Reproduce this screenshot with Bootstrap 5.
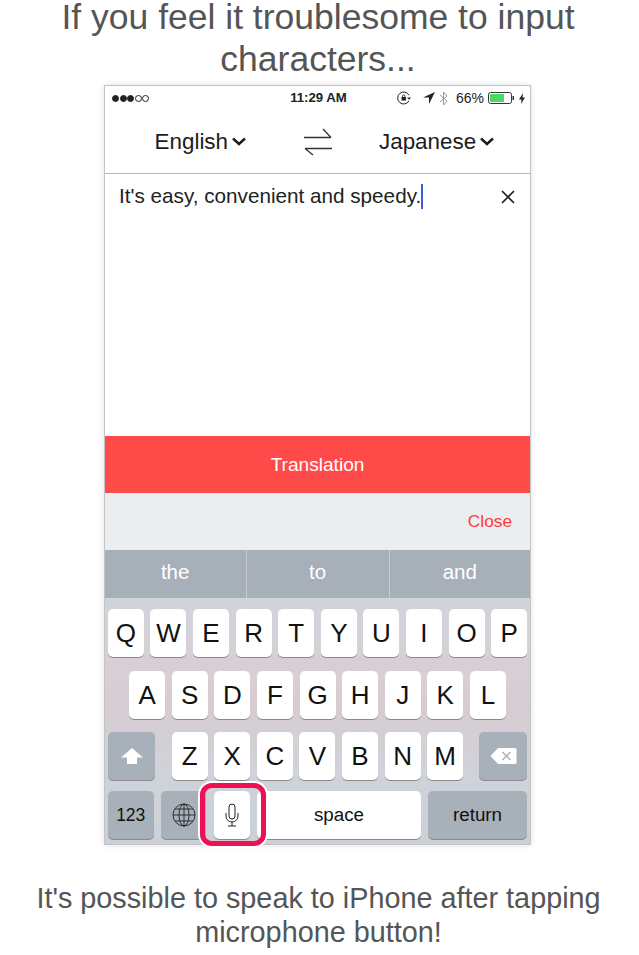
<!DOCTYPE html>
<html lang="en">
<head>
  <meta charset="UTF-8">
  <title>Voice input</title>
  <meta name="viewport" content="width=device-width, initial-scale=1.0"/>
  <link href="https://cdn.jsdelivr.net/npm/bootstrap@5.3.3/dist/css/bootstrap.min.css" rel="stylesheet">
  <style>
    body {
      background-color: #fff;
      font-family: "Liberation Sans", Arial, sans-serif;
      overflow: hidden;
    }
    .page-head {
      height: 85px;
      padding-right: 3px;
      font-size: 35.5px;
      line-height: 34px;
      color: #555;
      text-align: center;
      margin: 0;
      font-weight: 400;
      font-family: "Liberation Sans", Arial, sans-serif;
    }
    .page-head span { display: block; }
    .page-head span + span { margin-top: 8px; }
    .phone {
      width: 427px;
      height: 760px;
      margin-left: 104px;
      border: 1px solid #c4c4c4;
      box-shadow: 0 0 6px rgba(0,0,0,.12);
      position: relative;
      background: #fff;
    }
    .status-bar {
      height: 24px;
      font-size: 14px;
      color: #222;
      padding: 0 5px 0 7px;
    }
    .status-bar > div { flex: 1 1 0; }
    .dot {
      width: 7px;
      height: 7px;
      border-radius: 50%;
      border: 1px solid #222;
      margin-right: .6px;
    }
    .dot.on { background: #222; }
    .clock { font-weight: 700; font-size: 13.2px; text-align: center; }
    .lang-bar {
      height: 64px;
      border-bottom: 1px solid #ff9a9a;
      font-size: 22.4px;
      color: #1c1c1c;
    }
    .lang-en { width: 141px; }
    .lang-jp { width: 152px; padding-left: 1px; }
    .swap-icon { margin-left: 12px; }
    .input-area {
      height: 262px;
      padding: 8px 15px 8px 14px;
      font-size: 20.7px;
      line-height: 28px;
      color: #222;
    }
    .caret-mark {
      display: inline-block;
      width: 2px;
      height: 25px;
      background: #3a62d8;
      vertical-align: -6px;
    }
    .translate-bar {
      height: 57px;
      padding-top: 1px;
      background: #ff4a4a;
      color: #fff;
      font-size: 19.1px;
    }
    .close-bar {
      height: 57px;
      padding-top: 1px;
      background: #ecedef;
      color: #ff3b3b;
      font-size: 17.3px;
      padding-right: 18px;
    }
    .keyboard {
      height: 294px;
      background: linear-gradient(180deg, #cfd5dc 0%, #d0d4da 20%, #d8ced4 42%, #d6cdd3 55%, #ced3d9 80%, #ccd1d7 100%);
    }
    .suggest-row {
      height: 48px;
      background: #a7afb9;
      color: #fff;
      font-size: 20.5px;
      gap: 1px;
    }
    .suggest-row > div {
      flex: 1 1 0;
      display: flex;
      align-items: center;
      justify-content: center;
      padding-bottom: 3px;
    }
    .suggest-row > div + div { border-left: 1px solid #c6ccd3; }
    .key-row { gap: 6.6px; justify-content: center; }
    .key {
      width: 36px;
      height: 48px;
      background: #fff;
      border-radius: 5px;
      box-shadow: 0 1px 0 #8a8a8e;
      font-size: 26px;
      color: #111;
      display: flex;
      align-items: center;
      justify-content: center;
      flex: none;
    }
    .key.dark { background: #a8b0ba; }
    .row-1 { margin-top: 11px; }
    .row-2 { margin-top: 14px; }
    .row-3 { margin-top: 13px; justify-content: flex-start; padding: 0 3px; }
    .row-4 { margin-top: 11px; justify-content: flex-start; padding: 0 3px; gap: 0; }
    .key.small-txt { font-size: 18.8px; }
    .key.num-txt { font-size: 17.5px; width: 45.500px; }
    .shift-key { width: 47px; margin-right: 10px; }
    .back-key { width: 48px; margin-left: 9.400px; }
    .globe-key { width: 45px; margin-left: 7.500px; padding-left: 11px; justify-content: flex-start; }
    .mic-key { margin-left: 8px; }
    .space-key { width: 164px; margin-left: 7px; }
    .return-key { width: 99px; margin-left: 7px; }
    .mic-frame {
      position: absolute;
      left: 95px;
      top: 697px;
      width: 66px;
      height: 63px;
      border: 5px solid #ee0f55;
      border-radius: 12px;
      box-shadow: 0 0 0 2px #fff;
    }
    .page-foot {
      margin: 36px 0 0;
      padding-right: 2px;
      font-size: 28.8px;
      line-height: 34px;
      color: #555;
      text-align: center;
    }
  </style>
</head>
<body>

<h1 class="page-head"><span>If you feel it troublesome to input</span><span>characters...</span></h1>

<div class="phone">
  <div class="status-bar d-flex align-items-center">
    <div class="d-flex align-items-center">
      <span class="dot on"></span><span class="dot on"></span><span class="dot on"></span><span class="dot"></span><span class="dot"></span>
    </div>
    <div class="clock">11:29 AM</div>
    <div class="d-flex align-items-center justify-content-end gap-1">
      <svg class="me-2" width="14" height="14" viewBox="0 0 14 14" fill="none" stroke="#222"><path d="M12 9.800A6 6 0 1 1 12 4.200"/><path d="M14 6.500l-2 2.300-2-2.300z" fill="#222" stroke="none"/><rect x="4.500" y="6" width="4.500" height="3.500" fill="#222" stroke="none"/><path d="M5.500 6V5a1.200 1.200 0 0 1 2.400 0v1" stroke-width=".8"/></svg>
      <svg width="12" height="12" viewBox="0 0 12 12"><path d="M12 0L0 5.500h6V12z" fill="#222"/></svg>
      <svg class="me-1" width="9" height="15" viewBox="0 0 9 15" fill="none" stroke="#999"><path d="M1 4l7 6-3.500 4V1L8 5l-7 6"/></svg>
      <span>66%</span>
      <svg width="27" height="12" viewBox="0 0 27 12"><rect x=".5" y=".5" width="23" height="11" rx="2" fill="#fff" stroke="#333"/><rect x="2" y="2" width="14" height="8" fill="#4cd964"/><rect x="24.500" y="4" width="1.500" height="4" fill="#333"/></svg>
      <svg width="6" height="11" viewBox="0 0 6 11"><path d="M4 0L0 6.500h2.500L2 11l4-6.500H3.500z" fill="#222"/></svg>
    </div>
  </div>

  <div class="lang-bar d-flex align-items-center justify-content-between">
    <div class="lang-en d-flex align-items-center justify-content-end">
      <span>English</span>
      <svg class="ms-1" width="14" height="9" viewBox="0 0 14 9" fill="none" stroke="#1c1c1c" stroke-width="2.400"><path d="M1 1.500l6 5.500 6-5.500"/></svg>
    </div>
    <svg class="swap-icon" width="28" height="28" viewBox="0 0 28 28" fill="none" stroke="#333" stroke-width="1.300"><path d="M0 9.500h27M19 1l8 8.500"/><path d="M28 20.500H1M9 27l-8-6.500"/></svg>
    <div class="lang-jp d-flex align-items-center justify-content-start">
      <span>Japanese</span>
      <svg class="ms-1" width="14" height="9" viewBox="0 0 14 9" fill="none" stroke="#1c1c1c" stroke-width="2.400"><path d="M1 1.500l6 5.500 6-5.500"/></svg>
    </div>
  </div>

  <div class="input-area d-flex justify-content-between align-items-start">
    <div>It's easy, convenient and speedy.<span class="caret-mark"></span></div>
    <svg class="mt-2" width="14" height="14" viewBox="0 0 14 14" stroke="#222" stroke-width="1.700"><path d="M1 1l12 12M13 1L1 13"/></svg>
  </div>

  <div class="translate-bar d-flex align-items-center justify-content-center">Translation</div>
  <div class="close-bar d-flex align-items-center justify-content-end">Close</div>

  <div class="keyboard">
    <div class="suggest-row d-flex"><div>the</div><div>to</div><div>and</div></div>

    <div class="key-row row-1 d-flex">
      <div class="key">Q</div><div class="key">W</div><div class="key">E</div><div class="key">R</div><div class="key">T</div><div class="key">Y</div><div class="key">U</div><div class="key">I</div><div class="key">O</div><div class="key">P</div>
    </div>
    <div class="key-row row-2 d-flex">
      <div class="key">A</div><div class="key">S</div><div class="key">D</div><div class="key">F</div><div class="key">G</div><div class="key">H</div><div class="key">J</div><div class="key">K</div><div class="key">L</div>
    </div>
    <div class="key-row row-3 d-flex">
      <div class="key dark shift-key">
        <svg width="24" height="18" viewBox="0 0 24 18"><path d="M12 1l11 9.500h-6V17H7v-6.500H1z" fill="#fff"/></svg>
      </div>
      <div class="key">Z</div><div class="key">X</div><div class="key">C</div><div class="key">V</div><div class="key">B</div><div class="key">N</div><div class="key">M</div>
      <div class="key dark back-key">
        <svg width="27" height="18" viewBox="0 0 27 18"><path d="M8 1h17a1.500 1.500 0 0 1 1.500 1.500v13A1.500 1.500 0 0 1 25 17H8L.5 9z" fill="#fff"/><path d="M12.500 5l8 8M20.500 5l-8 8" stroke="#a8b0ba" stroke-width="1.500"/></svg>
      </div>
    </div>
    <div class="key-row row-4 d-flex">
      <div class="key dark num-txt">123</div>
      <div class="key dark globe-key">
        <svg width="24" height="24" viewBox="0 0 24 24" fill="none" stroke="#222" stroke-width=".9"><circle cx="12" cy="12" r="11"/><ellipse cx="12" cy="12" rx="5" ry="11"/><path d="M12 1v22M1 12h22M3 6h18M3 18h18"/></svg>
      </div>
      <div class="key mic-key">
        <svg width="14" height="24" viewBox="0 0 14 24" fill="none" stroke="#222" stroke-width="1"><rect x="4" y="1" width="6" height="15" rx="3"/><path d="M1 10v3a6 6 0 0 0 12 0v-3M7 19v4M3 23h8"/></svg>
      </div>
      <div class="key small-txt space-key">space</div>
      <div class="key dark small-txt return-key">return</div>
    </div>
  </div>

  <div class="mic-frame"></div>
</div>

<p class="page-foot">It's possible to speak to iPhone after tapping<br>microphone button!</p>

<script src="https://cdn.jsdelivr.net/npm/bootstrap@5.3.3/dist/js/bootstrap.bundle.min.js"></script>
</body>
</html>
